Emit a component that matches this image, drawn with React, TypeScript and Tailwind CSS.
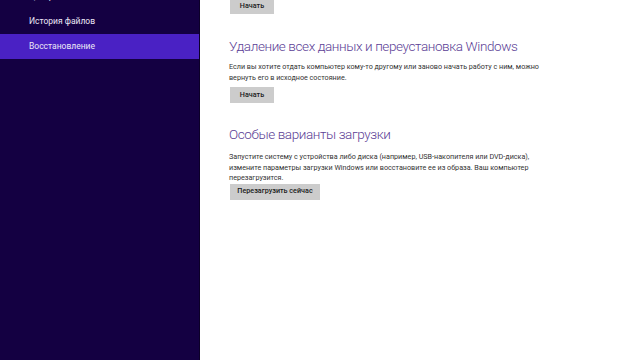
const font = { fontFamily: 'Roboto, "Noto Sans", "DejaVu Sans", sans-serif' };

const sideItems = [
  { label: 'Центр обновления Windows', active: false },
  { label: 'История файлов', active: false },
  { label: 'Восстановление', active: true },
];

function Btn({ children, w }: { children: string; w: string }) {
  return (
    <button
      className={`ml-px flex h-[16px] items-center justify-center bg-[#cccccc] text-[7.2px] font-medium text-[#1a1a1a] ${w}`}
    >
      {children}
    </button>
  );
}

export default function App() {
  return (
    <div className="flex h-[360px] w-[640px] overflow-hidden bg-white" style={font}>
      {/* Sidebar */}
      <aside className="flex w-[200px] shrink-0 flex-col border-r border-[#0c0028] bg-[#140042]">
        <div className="mt-[-16px] flex flex-col">
          {sideItems.map((it) => (
            <div
              key={it.label}
              className={`flex h-[25px] items-center pl-[29px] text-[8.5px] text-[#ece8f6] ${
                it.active ? 'bg-[#4a21c4]' : ''
              }`}
            >
              {it.label}
            </div>
          ))}
        </div>
      </aside>

      {/* Content */}
      <main className="flex flex-1 flex-col pl-[29px]">
        <div className="mt-[-2px]">
          <Btn w="w-[44px]">Начать</Btn>
        </div>

        <h2 className="mt-[22px] text-[13.5px] font-light leading-[20px] tracking-[-0.4px] text-[#5b3e95]">
          Удаление всех данных и переустановка Windows
        </h2>
        <p className="mt-[5px] w-[310px] text-[7.2px] leading-[11px] text-[#333333]">
          Если вы хотите отдать компьютер кому-то другому или заново начать работу с ним, можно
          вернуть его в исходное состояние.
        </p>
        <div className="mt-[4px]">
          <Btn w="w-[44px]">Начать</Btn>
        </div>

        <h2 className="mt-[21px] text-[13.5px] font-light leading-[20px] tracking-[-0.4px] text-[#5b3e95]">
          Особые варианты загрузки
        </h2>
        <p className="mt-[8px] w-[310px] text-[7.2px] leading-[10.5px] text-[#333333]">
          Запустите систему с устройства либо диска (например, USB-накопителя или DVD-диска),
          измените параметры загрузки Windows или восстановите ее из образа. Ваш компьютер
          перезагрузится.
        </p>
        <div className="mt-0">
          <Btn w="w-[90px]">Перезагрузить сейчас</Btn>
        </div>
      </main>
    </div>
  );
}
